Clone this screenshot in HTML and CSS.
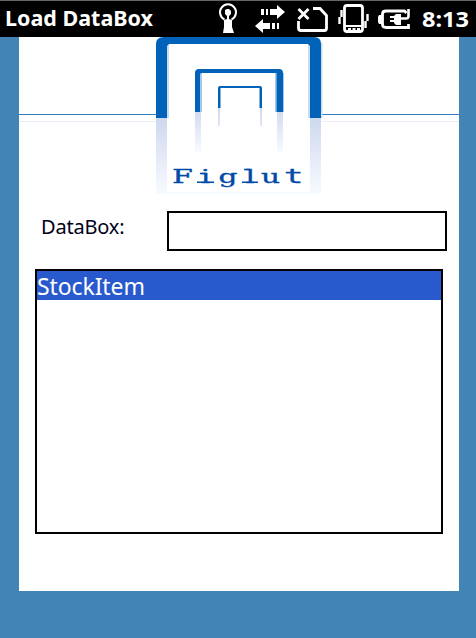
FILE: index.html
```html
<!DOCTYPE html>
<html lang="en">
<head>
<meta charset="utf-8">
<title>Load DataBox</title>
<link rel="stylesheet" href="styles.css">
</head>
<body>
<header class="status">
  <svg class="status-art" width="476" height="37" viewBox="0 0 476 37">
    <text class="bar-text" x="5" y="26" textLength="148" lengthAdjust="spacingAndGlyphs">Load DataBox</text>
    <g fill="none" stroke="#fff" stroke-width="2">
      <path d="M224.500 19.500A8 8 0 1 1 231.500 19.500"/>
      <path d="M298.500 9L308.500 19M308.500 9L298.500 19" stroke-width="2.8"/>
      <path d="M313 8.500H320L326.500 15.500V28Q326.500 30.500 324.500 30.500H301Q298.500 30.500 298.500 28V21" stroke-width="2.8"/>
      <rect x="344.500" y="5.500" width="18" height="26" rx="2.500" stroke-width="2.8"/>
      <path d="M345 26H362" stroke-width="2"/>
      <path d="M341.500 10V17M339.500 17V24M367.500 14V21M365.500 21V28" stroke-width="2.4"/>
      <path d="M406.500 13L404.500 11H386Q382.500 11 382.500 14V24.500Q382.500 27.500 386 27.500H408.500V24" stroke-width="2.8"/>
      <path d="M400 18.500H406Q408.500 18.500 408.500 16V9" stroke-width="2.6"/>
    </g>
    <g fill="#fff">
      <path d="M225 10L227 9H229L231 11V14L229 16V19L232 20V27L234 33H223L224 27V20L227 19V16L225 14Z"/>
      <path d="M261 9h3v6h-3zM266 9h2v6h-2zM270 9h7V5L285 12L277 19V15h-7zM279 23h-2v6h2zM275 23h-3v6h3zM270 23h-7V19L255 26L263 33V29h7z"/>
      <path d="M394 16L396 14H401V25H396L394 23V22H390V20H394V18H390V16Z"/>
      <path d="M382 15H379L378 17V22L379 24H382Z"/>
      <path d="M348 28h3v2h-3zM352.500 28h3v2h-3zM357 28h3v2h-3z"/>
    </g>
    <text class="bar-text" x="422" y="27" textLength="47" lengthAdjust="spacingAndGlyphs">8:13</text>
  </svg>
</header>
<main class="panel">
  <svg class="brand" width="440" height="161" viewBox="19 37 440 161">
    <defs>
      <linearGradient id="fade" x1="0" x2="0" y1="0" y2="1">
        <stop offset="0" stop-color="#cdd9ee"/>
        <stop offset=".5" stop-color="#e5e9f8"/>
        <stop offset="1" stop-color="#f7fbff"/>
      </linearGradient>
    </defs>
    <path d="M19 114.500H156M322 114.500H459" stroke="#357cbd"/>
    <path d="M19 121.500H156M322 121.500H459" stroke="#ececf6"/>
    <path d="M167 44h2v74h-2zM308 44h2v74h-2zM321 43h1.500v75H321z" fill="#cadcf0"/>
    <path d="M200 73h2v39h-2zM283 73h1v39h-1zM275 73h1.500v39H275z" fill="#a8c8e6"/>
    <path d="M156 118V44Q156 37 164 37H314Q321 37 321 44V118H310V46L308 44H169L167 46V118Z" fill="#0062b8"/>
    <path d="M195 112V73Q195 69 199 69H279Q283 69 283 73V112H276.500V73H201L200 74V112Z" fill="#0062b8"/>
    <path d="M218 108V88Q218 86 220 86H260Q262 86 262 88V108H259.500V88H220.500V108Z" fill="#0062b8"/>
    <path d="M156 118h11v76h-11zM310 118h11v76h-11z" fill="url(#fade)"/>
    <path d="M195 112h6v40h-6zM277 112h6v40h-6zM218 108h2v18h-2zM260 108h2v18h-2z" fill="url(#fade)"/>
    <path d="M157 192H321V194H157Z" fill="#f5faff"/>
    <path d="M197 182.200H214M242 182.200H258M200 173.500H206M244 169.500H250" stroke="#004aa8" stroke-width="1.500"/>
    <g class="wordmark">
      <text transform="translate(0 183) scale(1.6 1)" x="107.700 125.400 136.600 153.500 163.200">Figlu<tspan class="wordmark-end" x="177.500" textLength="13">t</tspan></text>
    </g>
  </svg>
  <div class="field">
    <label class="label" for="databox">DataBox:</label>
    <input class="input" id="databox" type="text">
  </div>
  <div class="list">
    <div class="item">StockItem</div>
  </div>
</main>
</body>
</html>
```
FILE: styles.css
```css
* { box-sizing: border-box; }
body {
  margin: 0;
  height: 638px;
  overflow: hidden;
  background: #4284b5;
  font-family: "Noto Sans", sans-serif;
}
.status {
  height: 37px;
  background: #000;
  border-top: 1px solid #666;
}
.status-art { display: block; margin-top: -1px; }
.bar-text {
  font-weight: 700;
  font-size: 22px;
  fill: #fff;
}
.panel {
  width: 440px;
  height: 554px;
  margin-left: 19px;
  background: #fff;
}
.brand { display: block; }
.wordmark {
  font-family: "DejaVu Serif", serif;
  font-size: 18.5px;
  fill: #004aa8;
  stroke: #004aa8;
  stroke-width: .35px;
}
.wordmark-end {
  font-family: "DejaVu Sans Mono", monospace;
  font-size: 20px;
}
.field {
  display: flex;
  margin-top: 13px;
  padding-left: 22px;
}
.label {
  width: 126px;
  color: #000018;
  font-size: 20px;
  letter-spacing: -.2px;
  line-height: 31px;
}
.input {
  width: 280px;
  height: 40px;
  border: 2px solid #000;
  border-radius: 0;
  background: #fff;
  outline: 0;
}
.list {
  width: 408px;
  height: 265px;
  margin: 18px 0 0 16px;
  border: 2px solid #000;
}
.item {
  height: 29px;
  background: #295acd;
  color: #fff;
  font-size: 23px;
  letter-spacing: -.1px;
  line-height: 31px;
}
```
